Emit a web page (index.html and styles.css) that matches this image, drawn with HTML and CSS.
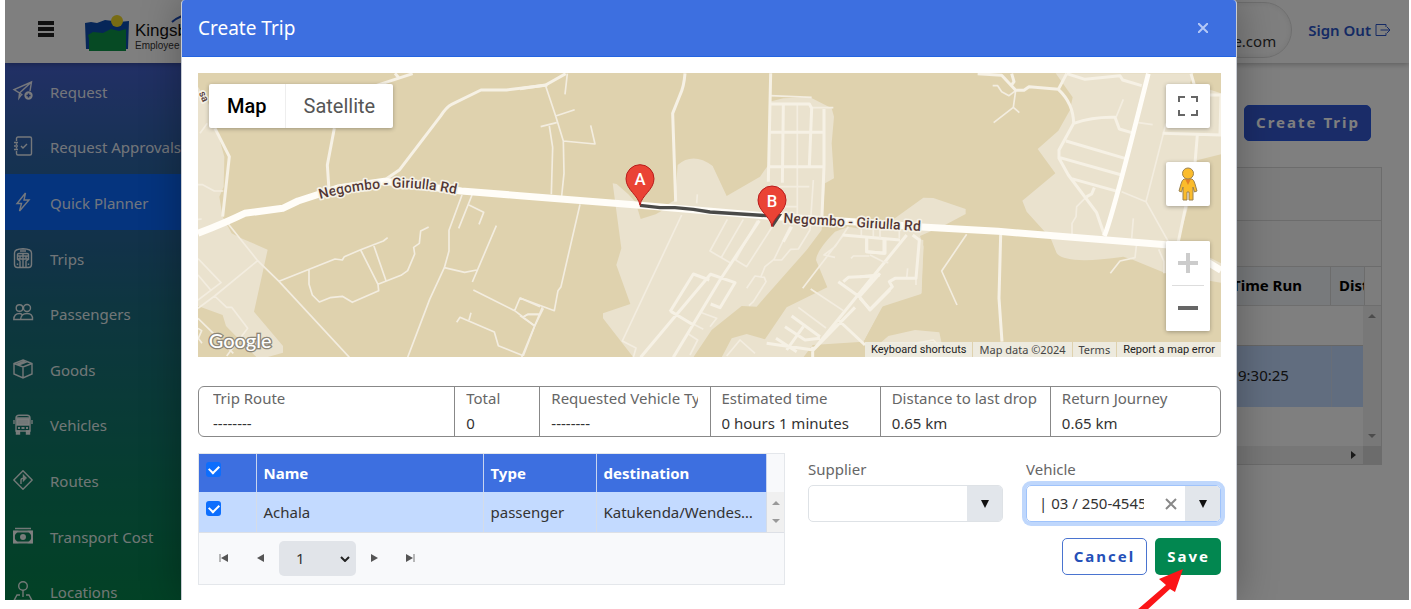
FILE: index.html
```html
<!DOCTYPE html>
<html lang="en">
<head>
<meta charset="utf-8">
<title>Create Trip</title>
<link rel="stylesheet" href="styles.css">
</head>
<body>
<div class="app">
  <header class="topbar">
    <button class="menu-btn" aria-label="Menu"><span></span><span></span><span></span></button>
    <div class="brand">
      <svg class="brand-mark" width="44" height="37" viewBox="0 0 44 37" aria-hidden="true">
        <path d="M0 8 L6 7 L12 8 L20 5 L28 6 L34 7 L44 6 L43 34 H1Z" fill="#0c4cb0"/>
        <path d="M4 36 V24 L3 20 L8 17 L18 18 L26 14 L34 16 L41 14 V36Z" fill="#0c9448"/>
        <circle cx="32" cy="6" r="6" fill="#f0d828"/>
      </svg>
      <div class="brand-text">
        <span class="brand-name">Kingsb</span>
        <span class="brand-sub">Employee</span>
        <svg class="brand-arc" width="24" height="12" viewBox="0 0 24 12" aria-hidden="true"><path d="M1 10 Q9 3 23 1" fill="none" stroke="#1848b8" stroke-width="2"/></svg>
      </div>
    </div>
    <div class="user-pill">e.com</div>
    <a class="sign-out" href="#">Sign Out
      <svg width="16" height="14" viewBox="0 0 16 14" fill="none" stroke="currentColor" stroke-width="1" aria-hidden="true"><path d="M11 4V1.500H1V12.500H11V10M5.500 7H15M12 4L15 7L12 10"/></svg>
    </a>
  </header>

  <div class="workspace">
    <nav class="sidebar">
      <a href="#"><svg viewBox="0 0 20 20"><path d="M9.500 14L6.500 12 6 17 8.500 13.500M6.500 12L1 8.500 18.500 1 17 10M6.500 12L18.500 1"/><circle cx="15.500" cy="14.500" r="3.500" fill="currentColor"/><path d="M13.500 14.500h4M15.500 12.500v4" stroke="#3558b8"/></svg>Request</a>
      <a href="#"><svg viewBox="0 0 20 20"><path d="M3.500 5V2.500Q3.500 1 5 1H17Q18.500 1 18.500 2.500V17.500Q18.500 19 17 19H5Q3.500 19 3.500 17.500V15M1 6.500H5M1 10H5M1 13.500H5M3.500 7.500V9M3.500 11V12.500M8 10L10 12 14 8"/></svg>Request Approvals</a>
      <a href="#" class="active"><svg viewBox="0 0 20 20"><path d="M12.500 1L4 11.500H8.500L6.500 19 16 8H11Z"/></svg>Quick Planner</a>
      <a href="#"><svg viewBox="0 0 20 20"><path d="M1.500 5Q1.500 1 10 .8Q18.500 1 18.500 5V16.500Q18.500 19.500 15.500 19.500H4.500Q1.500 19.500 1.500 16.500ZM4.500 6.500Q4.500 5.500 6 5.500H14Q15.500 5.500 15.500 6.500V11H4.500ZM7 3H13M10 5.500V19M4.500 8H15.500M7 11V8M13 11V8M4 11L7 13V19M16 11L13 13V19M4.500 15.500V17M15.500 15.500V17"/></svg>Trips</a>
      <a href="#"><svg viewBox="0 0 20 20"><circle cx="6.500" cy="5" r="3.300"/><circle cx="14" cy="5" r="3.500"/><path d="M7.500 16.500Q8 10.500 14 10.500T19.500 16.500ZM7 16.500H.8Q1 10.500 6.500 10.500Q8 10.500 9 11.500"/></svg>Passengers</a>
      <a href="#"><svg viewBox="0 0 20 20"><path d="M10 1L19 4.500V15L10 19 1 15V4.500ZM1 4.500L10 8 19 4.500M10 8V19M5.500 6.200L14.500 2.700M3.500 5.500L12 2"/></svg>Goods</a>
      <a href="#"><svg viewBox="0 0 20 20"><path d="M3 17V4Q3 1.200 6 1.200H14Q17 1.200 17 4V17ZM1 6V10M19 6V10M3 4H17"/><path d="M4 5H16V11H4ZM3.500 17H6.500V20H3.500ZM13.500 17H16.500V20H13.500Z" fill="currentColor"/><path d="M5 14H7M8.500 14H11.500M13 14H15" stroke-width="2"/></svg>Vehicles</a>
      <a href="#"><svg viewBox="0 0 20 20"><path d="M10 .8L19.200 10 10 19.200 .8 10Z" stroke-linejoin="round"/><path d="M8 14V10Q8 8 12 8M10.500 5.500L13 8 10.500 10.500Z"/></svg>Routes</a>
      <a href="#"><svg viewBox="0 0 20 20"><path d="M2 2.500H18" stroke-width="1.500"/><path d="M1 5.500H19V16.500H1Z" stroke-width="2"/><path d="M1 9L4 5.500H1ZM19 9L16 5.500H19ZM1 13L4 16.500H1ZM19 13L16 16.500H19Z" fill="currentColor"/><circle cx="10" cy="11" r="2.300" fill="currentColor"/></svg>Transport Cost</a>
      <a href="#"><svg viewBox="0 0 20 20"><circle cx="10" cy="5" r="4.300"/><path d="M10 9.500V16M7 14H4L1 19.500H19L16 14H13"/></svg>Locations</a>
    </nav>

    <main class="content">
      <button class="btn-create">Create Trip</button>
      <section class="grid-panel">
        <div class="grid-toolbar"></div>
        <div class="grid-filter"></div>
        <div class="grid-head"><span class="col-time">Time Run</span><span class="col-dist">Dist</span><span class="col-pad"></span></div>
        <div class="grid-body">
          <div class="grid-rows">
            <div class="grid-row"></div>
            <div class="grid-row selected"><span class="col-time">9:30:25</span><span></span></div>
            <div class="grid-row"></div>
          </div>
          <div class="scroll-y"><i class="tri up"></i><i class="tri down"></i></div>
        </div>
        <div class="scroll-x"><span><i class="tri right"></i></span><b></b></div>
      </section>
    </main>
  </div>

  <div class="backdrop">
    <div class="modal" role="dialog" aria-labelledby="dlg-title">
      <div class="modal-head">
        <h1 id="dlg-title">Create Trip</h1>
        <button class="close" aria-label="Close"><svg width="10" height="10" viewBox="0 0 10 10"><path d="M0 0L10 10M10 0L0 10" stroke="#b4c8f6" stroke-width="2"/></svg></button>
      </div>
      <div class="modal-body">
        <div class="map">
          <svg class="map-art" viewBox="0 0 3069 852" preserveAspectRatio="xMidYMid slice" role="img" aria-label="Route map">
            <rect width="3069" height="852" fill="#dfd2ae"/>
            <g fill="#eae2ce">
              <g transform="translate(-54,-39)">
                <path d="M54 80L85 130 112 215 133 290 131 380 118 410 128 470 155 520 180 533 263 569 222 755 309 858 309 878 260 892H230L138 798 128 765 54 738Z"/>
              </g>
              <g transform="translate(966,-39)">
                <path d="M278 370L290 372 325 403 352 432H445L465 420 473 315Q520 275 578 318L620 408 720 350 745 315 748 125 790 115 870 112 935 145 942 170 935 250 942 355 915 370 905 510 860 570 710 740 665 738 575 810 520 892H340L249 775V760L331 732 289 615 304 565Z"/>
                <path d="M605 892L635 835 680 822 735 838 800 742 922 682 888 600Q890 570 945 515L985 500 1210 540 1205 700 1090 735 1030 845 878 855 850 892Z"/>
              </g>
              <g transform="translate(1986,-39)">
                <path d="M587 40L638 112 630 150 595 212 533 267 586 340 487 422 500 455 572 535 590 580Q620 615 790 590L820 600 917 640 1083 668V610L955 545 990 420 1005 302 1083 283V100L990 70 1000 40Z"/>
                <path d="M0 490L90 485 190 413 220 414 317 447V462L255 495 180 528 191 560 183 702 65 740 10 845 0 845Z"/>
                <path d="M60 850L85 828 165 810 238 817 245 850Z"/>
              </g>
            </g>
            <path d="M1318 405L1328 438 1373 424 1421 397Z" fill="#dfd2ae"/>
            <g class="roads">
              <g transform="translate(-54,-39)">
                <g class="lane">
                  <path d="M145 492L233 602 297 664 508 892M233 602L104 708 54 745M54 596L123 668 54 720M54 645L94 692M104 708L140 742H155L203 805 140 888M54 775L110 830 160 880M54 805L65 812 55 835 66 850M297 664L465 597 487 600 493 590 540 570 610 543 623 533M387 628V673L397 705 418 726 450 713 487 709 517 727 596 692 594 673 542 570M580 553L618 662M594 673L663 646 683 632 704 582 701 562 718 550 722 513 746 501M846 405L807 511V573L793 623 749 718 683 892M876 405L836 505M867 435L911 457 897 493M793 623L854 637 890 630M949 497L877 666M880 690L1004 752 1064 798M1004 752L1020 714 1080 740M1030 770L1045 763H1080M1030 887L1064 798 1090 745M830 787L840 772 943 816 955 857 1030 887M867 780L873 758M54 374H68L103 393H130M54 478L65 477M60 220L82 190"/>
                </g>
                <g class="street">
                  <path d="M105 205L148 290 128 470M463 205L442 315 447 390M590 76L698 41M645 40L655 52M605 366L659 329 781 169Q800 140 815 133L903 90H980L1102 75"/>
                </g>
              </g>
              <g transform="translate(966,-39)">
                <g class="lane">
                  <path d="M77 78L107 168 130 243 225 252 212 196M107 168L164 149M62 200L110 188M88 198L98 262 94 403M130 243L132 340 125 408M142 41L135 103M180 433L123 680 114 692 103 752 0 714M67 742L5 892M45 798L0 767M12 770L22 763H57M485 465L307 843 348 864 340 892M532 403L530 430M622 478L570 573 633 610M670 478L604 592M712 482L647 600 680 620 760 495M810 500L762 598 735 620 722 652M880 360L870 510 835 567 812 568 785 600H762M832 135V480M750 107L875 112M875 143H940M747 380H868M790 440H830M680 685L705 648 733 652 738 665 700 725 687 737M450 755L550 808M545 758L590 775 570 800M505 822L533 840 510 885M968 528L848 685M985 500L945 560 912 585 945 592M993 595L1000 588H1048M872 687L970 752M1024 500V530M1060 505V530M620 888L660 840 705 880M835 742L918 804"/>
                </g>
                <g class="street">
                  <path d="M0 86L77 75 137 41M495 40Q492 80 480 105L458 160 467 425M752 40L745 365M750 132H868L875 145 868 320M790 135L787 368M912 147V320M748 217H912M745 320H912M912 320L905 490M718 482L600 660 460 892M572 642L362 892M450 755L520 642 568 660M570 642L645 668 600 743 572 732M455 755L520 795M880 870L1005 742M880 870L740 850M768 835L830 875M795 800L855 840 900 835M815 768L900 830M850 800L800 870M878 860V892M955 780L1035 855M955 665L1018 710 1050 750 1110 690M970 665L985 652 1065 648M1018 710L1080 640M968 525L1140 540M1040 535V575L1095 580V540M1160 525L880 870M815 500L790 545"/>
                </g>
              </g>
              <g transform="translate(1986,-39)">
                <g class="lane">
                  <path d="M467 92L460 142 401 188M460 142L478 158M398 77H413L425 95 447 107 467 92M790 118L768 172M835 188L878 194M918 190L858 425 785 395M858 425L925 545M820 475L815 535M830 550L825 593 780 603 751 640M680 410L650 440 648 470 636 490V522M320 523L245 633 291 735M30 585L70 605 85 608M143 625L140 655M168 675V655M896 568L912 605V640M60 510V535M118 510V535M165 850L220 840 240 860"/>
                </g>
                <g class="street">
                  <path d="M353 41L425 46 467 91H492L507 80 595 88Q640 130 641 190L597 270V295L625 345 710 458 733 525M595 88L620 41M455 41L462 65 455 75M620 41L675 58 780 47 788 60 845 77M641 190Q700 170 765 172L778 207 815 218M618 243L795 295M600 293L785 345M632 355L775 395M680 410L695 402 703 383M422 525L417 715 426 845M993 41L1003 75M1050 105H1083L1080 222M908 220L1083 225M1012 225L1005 310M978 435L955 545M20 538V575L72 580V540M0 650L60 645M0 715L30 748 97 680 88 665 105 655H168L178 540 158 525"/>
                </g>
                <path class="main-road" d="M733 528Q755 480 865 41"/>
              </g>
              <path class="avenue" d="M0 481Q80 450 140 421L254 406 300 384 420 345 560 325 790 354 966 368 1326 397 1706 429 1986 448 2158 461 2400 475 2904 515 2986 541 3069 592"/>
            </g>
            <path d="M1326 397L1386 404H1431L1486 409 1536 417 1706 428H1743L1722 459" fill="none" stroke="#4a4a48" stroke-width="10"/>
            <g class="road-label">
              <path id="label-w" d="M366 378Q470 350 570 345T785 366" fill="none"/>
              <path id="label-e" d="M1756 449L2300 482" fill="none"/>
              <text><textPath href="#label-w">Negombo - Giriulla Rd</textPath></text>
              <text><textPath href="#label-e">Negombo - Giriulla Rd</textPath></text>
              <text transform="translate(2,60) rotate(65)">sa</text>
            </g>
            <g class="pin" transform="translate(1326,397)"><path d="M0 0C-4 -30 -42 -46 -42 -80A42 42 0 0 1 42 -80C42 -46 4 -30 0 0Z"/><text y="-60">A</text></g>
            <g class="pin" transform="translate(1722,461)"><path d="M0 0C-4 -30 -42 -46 -42 -80A42 42 0 0 1 42 -80C42 -46 4 -30 0 0Z"/><text y="-60">B</text></g>
            <text class="google" x="32" y="826">Google</text>
          </svg>
          <div class="map-type"><button class="on">Map</button><button>Satellite</button></div>
          <div class="map-tools">
            <button aria-label="Toggle fullscreen"><svg width="20" height="20" viewBox="0 0 20 20" fill="none" stroke="#666" stroke-width="2"><path d="M1 6V1H7M13 1H19V6M19 14V19H13M7 19H1V14"/></svg></button>
            <button class="pegman" aria-label="Street View"><svg width="20" height="34" viewBox="0 0 20 34" fill="#fbbc2c" stroke="#9b8250"><path d="M6 12H14Q16 13 17 17L19 24 16.500 25 15 20V33H11V25H9V33H5V20L3.500 25 1 24 3 17Q4 13 6 12Z"/><path d="M7 12H13L10 18Z" fill="#e58225" stroke="none"/><circle cx="10" cy="6.500" r="5.500"/></svg></button>
            <div class="zoomer">
              <button aria-label="Zoom in"><svg width="20" height="20" viewBox="0 0 20 20"><path d="M0 10H20M10 0V20" stroke="#ccc" stroke-width="4"/></svg></button>
              <button aria-label="Zoom out"><svg width="20" height="20" viewBox="0 0 20 20"><path d="M0 10H20" stroke="#666" stroke-width="4"/></svg></button>
            </div>
          </div>
          <div class="map-legal"><button>Keyboard shortcuts</button><span>Map data ©2024</span><a href="#" class="terms">Terms</a><a href="#">Report a map error</a></div>
        </div>

        <dl class="summary">
          <div class="wide"><dt>Trip Route</dt><dd>--------</dd></div>
          <div><dt>Total</dt><dd>0</dd></div>
          <div class="mid"><dt>Requested Vehicle Type</dt><dd>--------</dd></div>
          <div class="mid"><dt>Estimated time</dt><dd>0 hours 1 minutes</dd></div>
          <div class="mid"><dt>Distance to last drop</dt><dd>0.65 km</dd></div>
          <div class="mid"><dt>Return Journey</dt><dd>0.65 km</dd></div>
        </dl>

        <div class="assign">
          <div class="people">
            <table>
              <colgroup><col class="c-check"><col class="c-name"><col class="c-type"><col><col class="c-scroll"></colgroup>
              <thead><tr><th><input type="checkbox" checked aria-label="Select all"></th><th>Name</th><th>Type</th><th>destination</th><td class="gutter"></td></tr></thead>
              <tbody><tr><td><input type="checkbox" checked aria-label="Select Achala"></td><td>Achala</td><td>passenger</td><td>Katukenda/Wendesiya</td><td class="bar"><i class="tri up"></i><i class="tri down"></i></td></tr></tbody>
            </table>
            <div class="pager">
              <button aria-label="First page"><svg width="10" height="10" viewBox="0 0 10 10"><path d="M1 1V9" stroke="#777"/><path d="M9 1V9L2 5Z"/></svg></button>
              <button aria-label="Previous page"><svg width="10" height="10" viewBox="0 0 10 10"><path d="M8 1V9L1 5Z"/></svg></button>
              <span class="page-select"><select aria-label="Page"><option>1</option></select><svg width="10" height="6" viewBox="0 0 10 6"><path d="M1 1L5 5 9 1" fill="none" stroke="#222" stroke-width="2"/></svg></span>
              <button aria-label="Next page"><svg width="10" height="10" viewBox="0 0 10 10"><path d="M2 1V9L9 5Z"/></svg></button>
              <button aria-label="Last page"><svg width="10" height="10" viewBox="0 0 10 10"><path d="M9 1V9" stroke="#777"/><path d="M1 1V9L8 5Z"/></svg></button>
            </div>
          </div>
          <form class="choice">
            <div class="field">
              <label for="supplier">Supplier</label>
              <div class="combo"><input id="supplier" type="text"><button type="button" aria-label="Open suppliers"><i class="tri down"></i></button></div>
            </div>
            <div class="field">
              <label for="vehicle">Vehicle</label>
              <div class="combo focused"><input id="vehicle" type="text" value="| 03 / 250-4545"><button type="button" class="clear" aria-label="Clear"><svg width="12" height="12" viewBox="0 0 12 12"><path d="M1 1L11 11M11 1L1 11" stroke="#888" stroke-width="2"/></svg></button><button type="button" aria-label="Open vehicles"><i class="tri down"></i></button></div>
            </div>
            <div class="actions"><button type="button" class="cancel">Cancel</button><button type="button" class="save">Save</button></div>
          </form>
        </div>
      </div>
    </div>
  </div>
</div>
<svg class="pointer" width="50" height="42" viewBox="0 0 50 42" aria-hidden="true"><path d="M46 2L22 12 29 18 0 43H10L33 22 38 25Z" fill="#fb1518"/></svg>
</body>
</html>
```
FILE: styles.css
```css
* { box-sizing: border-box; }
body {
  margin: 0;
  padding: 0 2px 9px 5px;
  height: 100vh;
  overflow: hidden;
  position: relative;
  background: #fff;
  font: 15px/24px "Noto Sans", sans-serif;
  color: #333;
}
button, input, select { font: inherit; color: inherit; border: 0; margin: 0; padding: 0; background: none; }
a { text-decoration: none; color: inherit; }
.tri { display: block; width: 0; height: 0; border: 4px solid transparent; }
.tri.up { border-top: 0; border-bottom-color: #999; }
.tri.down { border-bottom: 0; border-top-color: #999; }
.tri.right { border-right: 0; border-left: 5px solid #333; }

.app { position: relative; height: 100%; overflow: hidden; display: flex; flex-direction: column; background: #fff; }

.topbar { flex: none; display: flex; align-items: center; height: 63px; padding: 0 18px 0 33px; background: #fff; box-shadow: 0 1px 6px rgba(0,0,0,.3); position: relative; z-index: 1; }
.menu-btn { display: grid; gap: 2px; width: 16px; margin-bottom: 5px; }
.menu-btn span { height: 4px; background: #222; }
.brand { display: flex; gap: 6px; margin-left: 31px; align-items: center; }
.brand-mark { display: block; margin-bottom: -4px; }
.brand-text { position: relative; display: grid; font-family: "Liberation Sans", sans-serif; color: #333; padding-top: 10px; }
.brand-name { font-size: 17px; line-height: 18px; color: #111; }
.brand-sub { font-size: 10px; line-height: 12px; }
.brand-arc { position: absolute; left: 36px; top: 0; }
.user-pill { margin-left: auto; width: 280px; height: 56px; margin-bottom: 4px; border: 1px solid #ddd; border-radius: 28px; padding: 26px 15px 0; text-align: right; box-shadow: inset 0 0 6px rgba(0,0,0,.08); }
.sign-out { display: flex; align-items: center; gap: 4px; margin: 0 0 4px 16px; font-weight: 600; color: #2a55c8; }

.workspace { flex: 1; min-height: 0; display: flex; }
.sidebar { flex: none; width: 240px; height: 556px; display: grid; grid-auto-rows: 1fr; background: linear-gradient(#4460cc, #2c64a4 18%, #246494 32%, #1c6c80 44%, #147470 60%, #0c7c60 76%, #048448); color: #fff; }
.sidebar a { display: flex; align-items: center; gap: 17px; padding: 2px 0 0 8px; color: rgba(255,255,255,.9); white-space: nowrap; }
.sidebar a.active { background: #0a68fc; }
.sidebar svg { width: 20px; height: 20px; margin-bottom: 2px; fill: none; stroke: currentColor; stroke-width: 1.4; overflow: visible; }

.content { flex: 1; min-width: 0; padding: 42px 27px 0 24px; display: flex; flex-direction: column; align-items: stretch; }
.btn-create { align-self: flex-end; margin-right: 11px; height: 36px; padding: 0 10px 2px 11px; border: 1px solid #2858e0; border-radius: 5px; background: #3458d0; color: #fff; font-weight: 700; letter-spacing: 2px; }
.grid-panel { margin-top: 26px; border: 1px solid #d8d8d8; background: #fff; }
.grid-toolbar { height: 53px; border-bottom: 1px solid #d8d8d8; background: #f8f8f8; }
.grid-filter { height: 46px; border-bottom: 1px solid #d8d8d8; background: #f8f8f8; }
.grid-head { display: flex; justify-content: flex-end; height: 39px; line-height: 36px; font-weight: 700; color: #000; background: #f1f5f9; border-bottom: 1px solid #ddd; }
.grid-head .col-time { width: 104px; padding-left: 5px; border-right: 1px solid #d8d8d8; }
.grid-head .col-dist { width: 33px; padding-left: 8px; overflow: hidden; }
.grid-head .col-pad { width: 17px; border-left: 1px solid #d8d8d8; background: #fafafa; }
.grid-body { display: flex; }
.grid-rows { flex: 1; }
.grid-row { height: 39px; display: flex; justify-content: flex-end; }
.grid-row.selected { height: 62px; line-height: 58px; background: #c3daff; border-top: 1px solid #ccc; color: #222; }
.grid-row.selected .col-time { width: 94px; border-right: 1px solid #d0dcf0; }
.grid-row.selected span:last-child { width: 31px; }
.scroll-y { width: 18px; background: #f0f0f0; display: flex; flex-direction: column; align-items: center; justify-content: space-between; padding: 8px 0; }
.scroll-x { display: flex; height: 18px; background: #eee; }
.scroll-x span { flex: 1; display: flex; justify-content: flex-end; align-items: center; padding-right: 7px; }
.scroll-x b { width: 18px; background: #d8d8d8; }

.backdrop { position: absolute; inset: 0; z-index: 2; display: flex; background: rgba(0,0,0,.5); padding: 0 172px 0 176px; }
.modal { flex: 1; min-width: 0; background: #fff; box-shadow: 0 0 40px rgba(0,0,0,.3); border: 1px solid #c8ccd4; border-width: 0 1px; border-radius: 4px 4px 0 0; overflow: hidden; }
.modal-head { display: flex; align-items: center; justify-content: space-between; height: 57px; padding: 0 28px 0 16px; background: #3d6fe0; color: #fff; border-bottom: 1px solid #2464e0; }
.modal-head h1 { margin: 0; font-size: 19px; font-weight: 400; }
.close { display: flex; }
.modal-body { padding: 16px 15px 16px 16px; }

.map { position: relative; height: 284px; overflow: hidden; font-family: Roboto, sans-serif; }
.map-art { display: block; width: 100%; height: 100%; }
.roads path { fill: none; stroke-linejoin: round; }
.roads .lane path { stroke: #f3ede0; stroke-width: 5; }
.roads .street path { stroke: #f6f1e5; stroke-width: 9; }
.roads .main-road { stroke: #fffdf8; stroke-width: 14; }
.roads .avenue { stroke: #fffdf8; stroke-width: 21; }
.road-label text { font: 500 42px Roboto, sans-serif; fill: #523735; stroke: #f5f1e6; stroke-width: 10; stroke-linejoin: round; paint-order: stroke; }
.road-label text:last-child { font-size: 30px; }
.pin path { fill: #ea4335; stroke: #b81c1c; stroke-width: 3; }
.pin text { font: 500 50px Roboto, sans-serif; fill: #fff; text-anchor: middle; }
.google { font: 500 60px Lato, sans-serif; fill: #fff; stroke: #8c8678; stroke-width: 8; paint-order: stroke; }
.map-type { position: absolute; left: 11px; top: 11px; display: flex; height: 44px; background: #fff; border-radius: 2px; box-shadow: 0 1px 4px rgba(0,0,0,.3); font-size: 20px; color: #565656; }
.map-type button { padding: 0 18px 2px; }
.map-type .on { font-weight: 500; color: #000; border-right: 1px solid #eee; }
.map-type button { padding-top: 2px; }
.map-tools { position: absolute; right: 11px; top: 11px; display: grid; }
.map-tools button { display: grid; place-items: center; width: 44px; height: 44px; background: #fff; border-radius: 2px; }
.map-tools > * { box-shadow: 0 1px 4px rgba(0,0,0,.3); }
.map-tools .pegman { margin-top: 34px; }
.zoomer { margin-top: 35px; padding: 0; background: #fff; border-radius: 2px; }
.zoomer button + button { position: relative; height: 46px; }
.zoomer button + button::before { content: ""; position: absolute; top: 0; left: 6px; right: 6px; height: 1px; background: #ddd; }
.map-legal { position: absolute; right: 0; bottom: 0; display: flex; gap: 1px; font-size: 11px; line-height: 15px; color: #222; }
.map-legal > * { padding: 0 6px; background: rgba(240,238,230,.85); }
.map-legal .terms, .map-legal span { font-family: "Noto Sans", sans-serif; color: #444; }

.summary { display: grid; grid-template-columns: repeat(12, 1fr); margin: 29px 0 16px; border: 1px solid #888; border-radius: 6px; }
.summary div { padding: 0 12px 0 11px; border-left: 1px solid #888; min-width: 0; }
.summary div:first-child { border-left: 0; padding-left: 14px; }
.summary .wide { grid-column: span 3; }
.summary .mid { grid-column: span 2; }
.summary dt, .summary dd { margin: 0; overflow: hidden; white-space: nowrap; }
.summary dt { line-height: 23px; color: #666; }
.summary dd { line-height: 26px; }

.assign { display: grid; grid-template-columns: 587fr 413fr; gap: 23px; }
.people { min-width: 0; border: 1px solid #e4e7eb; background: #f8f9fb; }
.people table { width: 100%; table-layout: fixed; border-collapse: collapse; }
.c-check { width: 57px; } .c-name { width: 227px; } .c-type { width: 113px; } .c-scroll { width: 18px; }
.people th { height: 38px; padding: 0 7px; text-align: left; background: #3d6fe0; color: #fff; font-weight: 700; border-right: 1px solid #c8d4f0; }
.people .gutter { background: #f8f9fb; }
.people tbody td { height: 40px; padding: 0 12px 0 7px; background: #c3daff; border-right: 1px solid #d4dce8; border-bottom: 1px solid #dde0e6; overflow: hidden; text-overflow: ellipsis; white-space: nowrap; }
.people tbody td.bar { padding: 0 5px; background: #f0f0f0; border-right: 0; }
.bar .down { margin-top: 14px; }
.people input { appearance: none; display: grid; place-items: center; width: 15px; height: 15px; margin-bottom: 7px; border-radius: 3px; background: #0d6efd; }
.people input::after { content: ""; width: 8px; height: 5px; margin-bottom: 2px; border: solid #fff; border-width: 0 0 2px 2px; transform: rotate(-45deg); }
.pager { display: flex; align-items: center; height: 51px; padding-left: 20px; }
.pager button { display: flex; }
.pager button svg { fill: #555; }
.pager button:nth-child(2) { margin-left: 27px; }
.page-select { position: relative; margin: 0 13px; width: 77px; height: 35px; }
.page-select select { appearance: none; width: 100%; height: 100%; padding-left: 17px; border-radius: 5px; background: #e1e4e9; }
.page-select svg { position: absolute; right: 6px; top: 15px; }
.pager button:last-child { margin-left: 26px; }

.choice { display: grid; grid-template-columns: 1fr 1fr; column-gap: 23px; align-content: start; padding-top: 4px; }
.field { min-width: 0; }
.field label { display: block; color: #666; margin-bottom: 4px; }
.combo { display: flex; height: 37px; border: 1px solid #dee2e6; border-radius: 5px; overflow: hidden; }
.combo input { flex: 1; min-width: 0; padding: 0 0 2px 12px; outline: 0; }
.combo button { display: grid; place-items: center; width: 35px; background: #e2e6eb; }
.combo button .tri { border-width: 8px 4px 0; border-top-color: #111; }
.combo .clear { background: none; margin-left: 12px; width: 29px; }
.combo.focused { border-color: #9fc3fb; box-shadow: 0 0 0 4px #bfd7fc; }
.actions { grid-column: 1 / -1; display: flex; justify-content: flex-end; gap: 8px; margin-top: 16px; }
.actions button { height: 37px; padding: 0 11px 2px 12px; border-radius: 5px; font-weight: 700; letter-spacing: 2px; }
.actions .cancel { border: 1px solid #4a74d0; color: #2450b8; background: #fff; padding-left: 11px; }
.save { background: #028750; color: #fff; }

.pointer { position: absolute; right: 224px; bottom: 0; z-index: 3; }
```
